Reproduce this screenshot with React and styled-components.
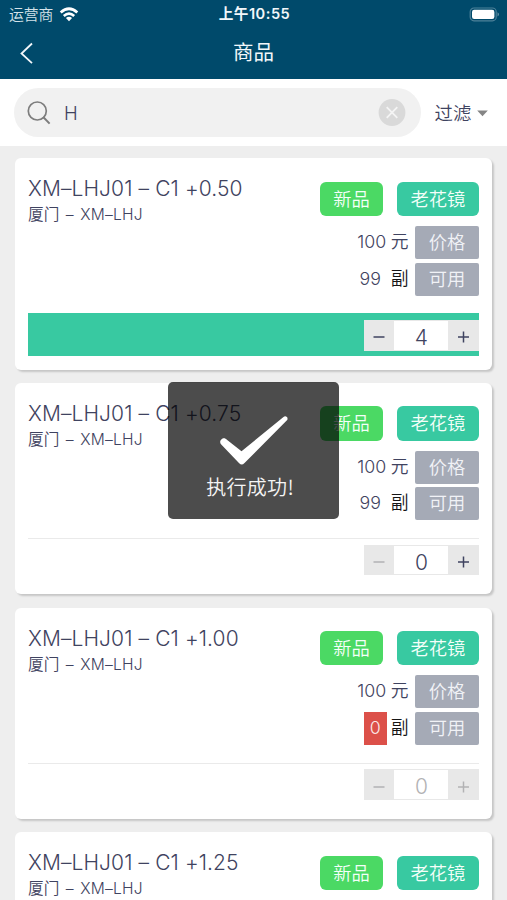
import React from 'react';
import styled, { createGlobalStyle } from 'styled-components';

const GlobalStyle = createGlobalStyle`
	* {
		box-sizing: border-box;
	}
	body {
		margin: 0;
		overflow: hidden;
		background: #eeeeee;
		color: #3f4360;
		font-family: Inter, "Noto Sans CJK SC", sans-serif;
		font-weight: 350;
	}
`

const Screen = styled.div`
	display: flex;
	flex-direction: column;
	width: 507px;
	height: 900px;
	overflow: hidden;
	background: #eeeeee;
`

const Header = styled.header`
	flex: none;
	height: 79px;
	background: #004a6b;
	color: #f2f7fa;
`

const StatusBar = styled.div`
	display: grid;
	grid-template-columns: 1fr auto 1fr;
	align-items: center;
	height: 27px;
	padding: 0 7px 0 9px;
	font-size: 14.8px;
	line-height: 28px;
`

const Carrier = styled.div`
	display: flex;
	align-items: center;
	gap: 6px;
	color: #d5e2e9;
`

const Clock = styled.div`
	font-weight: 600;
	font-size: 14.6px;
	letter-spacing: 0.5px;
	line-height: 29px;
	white-space: pre;
`

const BatteryBox = styled.div`
	display: flex;
	justify-content: flex-end;
`

const TitleBar = styled.div`
	display: grid;
	grid-template-columns: 1fr auto 1fr;
	align-items: center;
	height: 52px;
	padding: 0 19px;
`

const Title = styled.h1`
	margin: 0;
	font-size: 20.5px;
	font-weight: 400;
	line-height: 51px;
	height: 52px;
`

const SearchBar = styled.div`
	flex: none;
	display: flex;
	align-items: center;
	height: 67px;
	padding: 0 18px 0 14px;
	background: #ffffff;
`

const SearchField = styled.div`
	display: flex;
	align-items: center;
	width: 407px;
	height: 49px;
	padding: 0 15px 0 13px;
	border-radius: 25px;
	background: #f1f1f1;
`

const Query = styled.span`
	flex: 1;
	padding-left: 13px;
	font-size: 18.5px;
	line-height: 24px;
`

const Filter = styled.div`
	display: flex;
	align-items: center;
	gap: 6px;
	margin-left: 13.5px;
	font-size: 18.4px;
	line-height: 24px;
`

const List = styled.main`
	display: flex;
	flex-direction: column;
	gap: 13.3px;
	padding: 12.4px 14.7px 0 14.5px;
`

const Card = styled.section`
	flex: none;
	height: 211.4px;
	padding: 0 13.4px;
	border-radius: 6px;
	background: #ffffff;
	box-shadow: 2px 2px 2px rgba(0, 0, 0, 0.17);
`

const CardBody = styled.div`
	display: flex;
	justify-content: space-between;
	height: 155px;
`

const Names = styled.div`
	padding-top: 17px;
	white-space: nowrap;
`

const Name = styled.div`
	font-size: 21px;
	line-height: 28px;
	letter-spacing: 0.1px;
`

const Store = styled.div`
	font-size: 15.6px;
	line-height: 23px;
	letter-spacing: 0.2px;
	word-spacing: 1.8px;
`

const Info = styled.div`
	display: flex;
	flex-direction: column;
	align-items: flex-end;
	padding-top: 23.4px;
`

const Tags = styled.div`
	display: flex;
	gap: 13.5px;
	margin-bottom: 10px;
`

const Tag = styled.span`
	height: 34.3px;
	padding: 0 13.6px;
	border-radius: 6px;
	background: ${props => props.$color};
	color: #f4fff9;
	font-size: 18.3px;
	line-height: 34px;
`

const InfoRow = styled.div`
	display: flex;
	align-items: center;
	height: 33px;
	margin-bottom: 3.7px;
	font-size: 17.8px;
	line-height: 32px;
`

const Amount = styled.span`
	height: 33px;
	margin-right: ${props => props.$gap}px;
	padding: ${props => props.$empty ? '0 6px' : 0};
	background: ${props => props.$empty ? '#dc5049' : 'none'};
	color: ${props => props.$empty ? '#fbe9e8' : 'inherit'};
`

const Unit = styled.span`
	height: 33px;
	margin-right: 6.6px;
	color: ${props => props.$dark ? '#151515' : 'inherit'};
`

const Label = styled.span`
	width: 63.7px;
	height: 33px;
	border-radius: 2px;
	background: #a5aab6;
	color: #f1f2f6;
	font-size: 18.3px;
	text-align: center;
`

const Footer = styled.div`
	display: flex;
	justify-content: flex-end;
	height: 42.6px;
	padding-top: 5.6px;
	border-top: 1px solid ${props => props.$active ? '#38c9a1' : '#eaeaea'};
	background: ${props => props.$active ? '#38c9a1' : 'none'};
`

const Stepper = styled.div`
	display: flex;
	width: 115px;
	height: 30.6px;
	background: #e8e8e8;
`

const StepButton = styled.div`
	display: flex;
	align-items: center;
	justify-content: center;
	width: 30.5px;
	padding-top: 4px;
	color: ${props => props.$disabled ? '#b2b2b4' : '#3f4360'};
`

const Count = styled.div`
	flex: 1;
	margin: 1px 0;
	background: #ffffff;
	color: ${props => props.$disabled ? '#b2b2b4' : '#3f4360'};
	font-size: 21px;
	line-height: 33px;
	text-align: center;
`

const Toast = styled.div`
	position: absolute;
	left: 168.3px;
	top: 382px;
	display: flex;
	flex-direction: column;
	align-items: center;
	width: 171px;
	height: 137px;
	padding-top: 33px;
	border-radius: 5px;
	background: rgba(0, 0, 0, 0.7);
	color: #f5f5f5;
	font-size: 20px;
	line-height: 40px;
`

const ToastText = styled.div`
	padding-right: 7.4px;
	font-family: "Noto Sans CJK SC", sans-serif;
	letter-spacing: 0.3px;
	white-space: nowrap;
`

const Wifi = () => (
	<svg width="20" height="15" viewBox="0 0 20 15" fill="none" stroke="#fff" strokeWidth="2.7">
		<path d="M1.7 5.5Q10 -2 18.3 5.5" />
		<path d="M4.8 8.9Q10 4.3 15.2 8.9" />
		<path d="M10 14.2L6.9 11.1Q10 8.6 13.1 11.1Z" fill="#fff" stroke="none" />
	</svg>
)

const Battery = () => (
	<svg width="31" height="15" viewBox="0 0 31 15">
		<rect x="1.2" y="1" width="26" height="12.8" rx="3.8" fill="none" stroke="#4d8199" strokeWidth="1.2" />
		<rect x="3" y="2.8" width="22.4" height="9.2" rx="2.2" fill="#fff" />
		<path d="M28.6 5.3Q31 7.4 28.6 9.5Z" fill="#7fa4b5" />
	</svg>
)

const BackIcon = () => (
	<svg width="15" height="22" viewBox="0 0 15 22" fill="none" stroke="#f2f7fa" strokeWidth="1.8">
		<path d="M13 1.5L2.5 11.5L13 21.2" />
	</svg>
)

const SearchIcon = () => (
	<svg width="24" height="24" viewBox="0 0 24 24" fill="none" stroke="#7d7d7d" strokeWidth="1.7">
		<circle cx="10.3" cy="10" r="9" />
		<path d="M16.2 16L22.6 22.6" strokeWidth="2" />
	</svg>
)

const ClearIcon = () => (
	<svg width="28" height="28" viewBox="0 0 28 28">
		<circle cx="14" cy="13.5" r="13.4" fill="#d9d9d9" />
		<path d="M8.7 8.2L19.3 18.8M19.3 8.2L8.7 18.8" stroke="#f4f4f4" strokeWidth="1.8" />
	</svg>
)

const Caret = () => (
	<svg width="11" height="9" viewBox="0 0 11 9">
		<path d="M0.2 2.5H10.8L5.5 8.3Z" fill="#858585" />
	</svg>
)

const Minus = () => (
	<svg width="12" height="12" viewBox="0 0 12 12" stroke="currentColor" strokeWidth="1.5">
		<path d="M0.5 6H11.5" />
	</svg>
)

const Plus = () => (
	<svg width="12" height="12" viewBox="0 0 12 12" stroke="currentColor" strokeWidth="1.5">
		<path d="M0 6H11M5.5 0.5V11.5" />
	</svg>
)

const CheckIcon = () => (
	<svg width="70" height="52" viewBox="0 0 70 52">
		<path d="M3.2 23.8C5 22.8 6.6 23.5 8.2 25L22.5 36.2L64.5 2C66.5 0.3 69.6 2.2 68.2 5L25.5 48C23.6 50 21.9 50 20.2 48.2L2 29.2C0.6 27.4 1 25 3.2 23.8Z" fill="#fff" />
	</svg>
)

const products = [
	{ name: 'XM–LHJ01 – C1 +0.50', price: 100, stock: 99, count: 4 },
	{ name: 'XM–LHJ01 – C1 +0.75', price: 100, stock: 99, count: 0 },
	{ name: 'XM–LHJ01 – C1 +1.00', price: 100, stock: 0, count: 0 },
	{ name: 'XM–LHJ01 – C1 +1.25' },
]

const Stock = ({ price, stock, soldOut }) => (
	<>
		<InfoRow>
			<Amount $gap={4.6}>{price}</Amount>
			<Unit>元</Unit>
			<Label>价格</Label>
		</InfoRow>
		<InfoRow>
			<Amount $empty={soldOut} $gap={soldOut ? 4 : 10}>{stock}</Amount>
			<Unit $dark>副</Unit>
			<Label>可用</Label>
		</InfoRow>
	</>
)

const Product = ({ name, price, stock, count }) => {

	const loaded = price !== undefined;
	const soldOut = stock === 0;

	return (
		<Card>
			<CardBody>
				<Names>
					<Name>{name}</Name>
					<Store>厦门 – XM–LHJ</Store>
				</Names>
				<Info>
					<Tags>
						<Tag $color="#4bd964">新品</Tag>
						<Tag $color="#38c9a1">老花镜</Tag>
					</Tags>
					{loaded && <Stock price={price} stock={stock} soldOut={soldOut} />}
				</Info>
			</CardBody>
			{loaded && (
				<Footer $active={count > 0}>
					<Stepper>
						<StepButton $disabled={count === 0}><Minus /></StepButton>
						<Count $disabled={soldOut}>{count}</Count>
						<StepButton $disabled={soldOut}><Plus /></StepButton>
					</Stepper>
				</Footer>
			)}
		</Card>
	)
}

const App = () => (
	<Screen>
		<GlobalStyle />
		<Header>
			<StatusBar>
				<Carrier>运营商 <Wifi /></Carrier>
				<Clock>上午10:55</Clock>
				<BatteryBox><Battery /></BatteryBox>
			</StatusBar>
			<TitleBar>
				<BackIcon />
				<Title>商品</Title>
			</TitleBar>
		</Header>
		<SearchBar>
			<SearchField>
				<SearchIcon />
				<Query>H</Query>
				<ClearIcon />
			</SearchField>
			<Filter>过滤 <Caret /></Filter>
		</SearchBar>
		<List>
			{products.map(product => <Product key={product.name} {...product} />)}
		</List>
		<Toast>
			<CheckIcon />
			<ToastText>执行成功!</ToastText>
		</Toast>
	</Screen>
)

export default App;
